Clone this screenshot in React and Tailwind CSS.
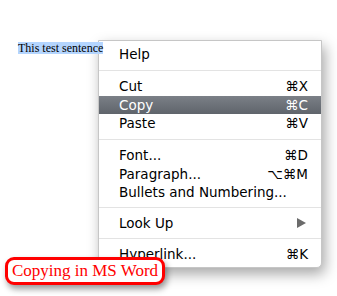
export default function App() {
  const row = "h-[18.5px] flex items-center justify-between pl-[20px] pr-[13px]";
  const sep = "flex items-center";
  return (
    <div className="relative w-[337px] h-[296px] bg-white overflow-hidden">
      <div className="pt-[34px] pl-[18px] relative z-10">
        <span className="bg-[#b4d5fe] text-black text-[12px] leading-[12px] inline-block h-[12px]" style={{ fontFamily: '"Liberation Serif", serif' }}>
          This test sentence
        </span>
      </div>
      <div
        className="absolute left-[98px] top-[40px] w-[224px] h-[228px] bg-white border border-[#c6c6c6] rounded-b-[5px] shadow-[3px_6px_14px_rgba(0,0,0,0.35)] pt-[4px] text-[13.5px] text-black"
        style={{ fontFamily: '"DejaVu Sans", sans-serif' }}
      >
        <div className={row}><span>Help</span></div>
        <div className={sep + " h-[13.5px]"}><div className="w-full h-px bg-[#e3e3e3]" /></div>
        <div className={row}><span>Cut</span><span>⌘X</span></div>
        <div className={row + " bg-gradient-to-b from-[#7b8087] to-[#5f646b] text-white"}><span>Copy</span><span>⌘C</span></div>
        <div className={row}><span>Paste</span><span>⌘V</span></div>
        <div className={sep + " h-[13.5px]"}><div className="w-full h-px bg-[#e3e3e3]" /></div>
        <div className={row}><span>Font...</span><span>⌘D</span></div>
        <div className={row}><span>Paragraph...</span><span>⌥⌘M</span></div>
        <div className={row}><span>Bullets and Numbering...</span></div>
        <div className={sep + " h-[12.5px]"}><div className="w-full h-px bg-[#e3e3e3]" /></div>
        <div className={row}>
          <span>Look Up</span>
          <svg width="9" height="10" viewBox="0 0 9 10" className="mr-[2px]"><polygon points="0,0 9,5 0,10" fill="#6b6b6b" /></svg>
        </div>
        <div className={sep + " h-[12.5px]"}><div className="w-full h-px bg-[#e3e3e3]" /></div>
        <div className={row}><span>Hyperlink...</span><span>⌘K</span></div>
      </div>
      <div
        className="absolute left-[5px] top-[257px] w-[160px] h-[28px] bg-white border-[3.5px] border-[#ff0000] rounded-[9px] shadow-[2px_4px_6px_rgba(0,0,0,0.4)] flex items-center justify-center text-[#ff0000] text-[17px]"
        style={{ fontFamily: '"Liberation Serif", serif' }}
      >
        Copying in MS Word
      </div>
    </div>
  );
}
